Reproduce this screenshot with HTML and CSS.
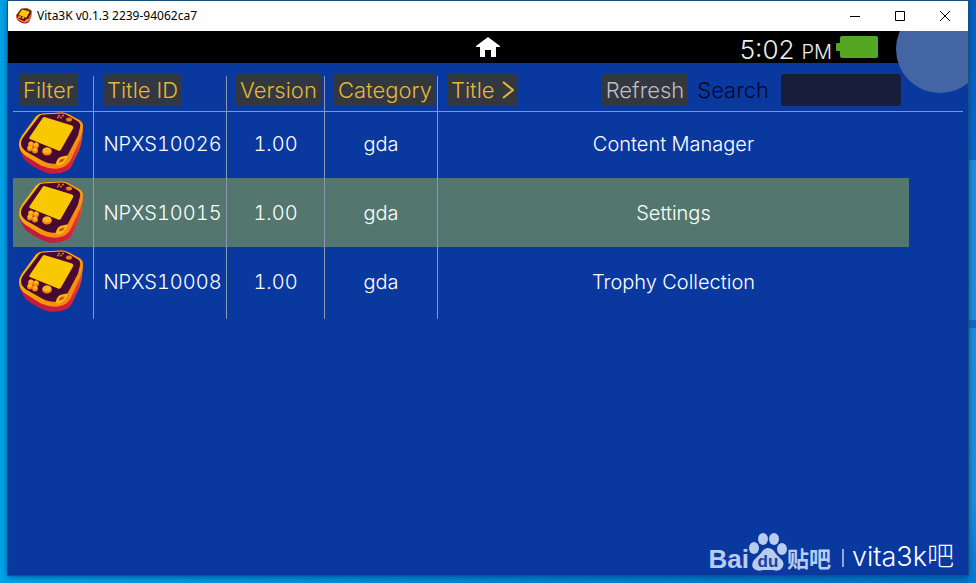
FILE: index.html
```html
<!DOCTYPE html>
<html lang="en">
<head>
<meta charset="utf-8">
<title>Vita3K v0.1.3 2239-94062ca7</title>
<link rel="stylesheet" href="styles.css">
</head>
<body>
<svg class="defs" aria-hidden="true">
  <defs>
    <linearGradient id="rim" x1="0" y1="0" x2="1" y2="1">
      <stop offset="0" stop-color="#ffc400"/><stop offset=".5" stop-color="#f9a00a"/><stop offset="1" stop-color="#ef7d14"/>
    </linearGradient>
    <linearGradient id="side" x1="0" y1="1" x2="1" y2="0">
      <stop offset="0" stop-color="#b3173f"/><stop offset=".45" stop-color="#d81f3c"/><stop offset="1" stop-color="#f26a1e"/>
    </linearGradient>
  </defs>
  <symbol id="vita" viewBox="0 0 64 62">
    <path fill="url(#side)" d="M17 4Q20 1 24 1L43 0Q46 0 50 2L61 8Q64 10 64 15L63 27Q62 33 60 38L53 53Q51 57 46 59Q39 62 30 61Q19 58 7 49Q3 44 1 38L0 29Z"/>
    <path fill="url(#rim)" d="M17 4Q20 1 24 1L43 0Q46 0 50 2L61 8Q64 10 64 14Q64 20 61 27L52 47Q48 55 39 56Q31 57 22 53L6 43Q0 38 0 32Q0 27 3 23Z"/>
    <path fill="#480a30" d="M20 4Q21 2 24 2L43 1Q46 1 49 3L59 9Q62 11 61 15L59 23L49 42Q48 44 43 45Q39 46 37 51Q31 52 23 48L7 39Q2 35 2 31Q2 28 4 25Z"/>
    <path fill="#fac800" d="M24 5Q25 4 27 5L53 13Q55 14 54 16L42 37Q41 39 39 38L12 27Q9 26 11 24Z"/>
    <path fill="#fbb813" d="M37 51Q38 45 43 44L48 43Q49 45 46 49Q43 53 39 53Q37 53 37 51Z"/>
    <path fill="#c0521c" d="M40 50Q40 46 46 46Q44 50 40 50Z"/>
    <g fill="#ee7d1c">
      <circle cx="12" cy="32" r="3"/><circle cx="17" cy="33" r="3"/><circle cx="11" cy="36" r="3"/><circle cx="16" cy="38" r="3"/>
      <ellipse cx="28" cy="39" rx="5" ry="4"/>
      <ellipse cx="50" cy="7" rx="3" ry="2"/><circle cx="40" cy="3" r="1"/><circle cx="44" cy="3" r="1"/><circle cx="42" cy="5" r="1"/><circle cx="39" cy="5" r="1"/>
    </g>
    <g fill="#ffb81b"><circle cx="12" cy="31" r="2"/><circle cx="17" cy="32" r="2"/><circle cx="11" cy="35" r="2"/><circle cx="16" cy="37" r="2"/><ellipse cx="28" cy="38" rx="4" ry="3"/></g>
  </symbol>
</svg>

<div class="window">
  <header class="titlebar">
    <svg class="app-icon" aria-hidden="true"><use href="#vita"/></svg>
    <span class="app-name">Vita3K v0.1.3 2239-94062ca7</span>
    <button class="win-btn" aria-label="Minimize"><svg viewBox="0 0 12 12"><path d="M1 6.500h10"/></svg></button>
    <button class="win-btn" aria-label="Maximize"><svg viewBox="0 0 12 12"><path d="M1.500 1.500h9v9h-9z"/></svg></button>
    <button class="win-btn" aria-label="Close"><svg viewBox="0 0 12 12"><path d="M1 1l10 10M11 1L1 11"/></svg></button>
  </header>

  <div class="screen">
    <div class="statusbar">
      <svg class="home" viewBox="0 0 24 20" aria-label="Home"><path d="M12 0l12 9v1h-4v10h-5v-7H9v7H4V10H0V9z"/></svg>
      <div class="clock"><span class="time">5:02</span><span class="ampm">PM</span>
        <svg class="battery" viewBox="0 0 42 22" aria-label="Battery"><rect y="7" width="5" height="8" rx="1"/><rect x="4" width="38" height="22" rx="2"/></svg>
      </div>
    </div>
    <div class="corner"></div>

    <main>
      <table>
        <colgroup><col class="c-icon"><col class="c-id"><col class="c-ver"><col class="c-cat"><col><col class="c-end"></colgroup>
        <thead>
          <tr>
            <th><button class="chip">Filter</button></th>
            <th><button class="chip">Title ID</button></th>
            <th><button class="chip">Version</button></th>
            <th><button class="chip">Category</button></th>
            <th>
              <div class="tools">
                <button class="chip sort">Title <svg viewBox="0 0 12 18" aria-hidden="true"><path d="M1 1l10 8L1 17"/></svg></button>
                <button class="chip refresh">Refresh</button>
                <label for="search">Search</label>
                <input id="search" type="text">
              </div>
            </th>
            <th></th>
          </tr>
        </thead>
        <tbody>
          <tr><td><svg class="icon"><use href="#vita"/></svg></td><td class="id">NPXS10026</td><td>1.00</td><td>gda</td><td>Content Manager</td><td></td></tr>
          <tr class="selected"><td><svg class="icon"><use href="#vita"/></svg></td><td class="id">NPXS10015</td><td>1.00</td><td>gda</td><td>Settings</td><td></td></tr>
          <tr><td><svg class="icon"><use href="#vita"/></svg></td><td class="id">NPXS10008</td><td>1.00</td><td>gda</td><td>Trophy Collection</td><td></td></tr>
        </tbody>
      </table>
    </main>
  </div>
</div>

<div class="watermark">
  <span class="brand">Bai</span>
  <span class="paw">
    <svg viewBox="0 0 38 40" aria-hidden="true"><ellipse cx="5" cy="16" rx="5" ry="6"/><ellipse cx="14" cy="7" rx="5" ry="6"/><ellipse cx="25" cy="7" rx="5" ry="6"/><ellipse cx="33" cy="17" rx="5" ry="6"/><path d="M19 16Q24 16 27 22L33 28Q36 32 33 36Q30 40 24 38H14Q8 40 4 36Q2 32 5 28L12 21Q15 16 19 16Z"/></svg>
    <span class="du">du</span>
  </span>
  <span class="tieba">贴吧</span>
  <span class="bar"></span>
  <span class="forum">vita3k吧</span>
</div>
</body>
</html>
```
FILE: styles.css
```css
* { box-sizing: border-box; }

body {
  margin: 0;
  min-height: 100vh;
  display: flex;
  padding: 1px 8px 8px;
  position: relative;
  font-family: Inter, "Noto Sans CJK SC", sans-serif;
  font-weight: 300;
  background:
    linear-gradient(#0560c4, #0568d0) right top / 8px 160px no-repeat,
    linear-gradient(#0b6cc8, #0b6cc8) right 320px / 8px 8px no-repeat,
    linear-gradient(#1f8ede, #1a90e0 500px, #0478d4) right top / 8px 100% no-repeat,
    linear-gradient(90deg, #00a2e8, #0084d4 50%, #0070c8);
}

.defs { position: absolute; width: 0; height: 0; }

button { font: inherit; border: 0; }

.window {
  flex: 1;
  display: flex;
  flex-direction: column;
  box-shadow: 0 0 0 1px #17507c, 0 1px 6px #023c7c;
}

.titlebar {
  height: 30px;
  display: flex;
  align-items: center;
  background: #fff;
  color: #000;
  padding: 0 1px 0 8px;
}
.app-icon { width: 16px; height: 16px; margin-right: 5px; }
.app-name {
  flex: 1;
  font: 400 12px/16px "Noto Sans", sans-serif;
}
.win-btn {
  width: 45px;
  height: 28px;
  padding: 0;
  background: none;
  display: grid;
  place-items: center;
}
.win-btn svg { width: 12px; height: 12px; fill: none; stroke: #000; stroke-width: 1; }

.screen {
  flex: 1;
  position: relative;
  overflow: hidden;
  background: #09389f;
}

.statusbar {
  height: 32px;
  display: grid;
  grid-template-columns: 1fr 24px 1fr;
  align-items: start;
  background: #000;
}
.home { grid-column: 2; width: 24px; height: 20px; margin-top: 6px; fill: #fff; }
.clock {
  display: flex;
  justify-content: flex-end;
  align-items: baseline;
  padding-right: 90px;
  color: #eee;
  line-height: 38px;
}
.time { font-size: 26px; margin-right: 7px; }
.ampm { font-size: 20px; margin-right: 4px; }
.battery { width: 42px; height: 22px; margin-top: 5px; fill: #55a622; align-self: flex-start; }

.corner {
  position: absolute;
  top: -26px;
  right: -16px;
  width: 88px;
  height: 88px;
  border-radius: 50%;
  background: #4365a3;
}

main { padding: 11px 5px; }

table {
  width: 100%;
  table-layout: fixed;
  border-collapse: separate;
  border-spacing: 0;
  font-size: 20px;
  font-variant-numeric: tabular-nums;
  line-height: 32px;
  color: #fff;
}
.c-icon { width: 81px; }
.c-id { width: 133px; }
.c-ver { width: 98px; }
.c-cat { width: 113px; }
.c-end { width: 54px; }

th {
  height: 38px;
  padding: 0 0 5px 9px;
  text-align: left;
  vertical-align: top;
  font-weight: 300;
  white-space: nowrap;
  border-bottom: 1px solid #8996b4;
  background: linear-gradient(#8996b4, #8996b4) right bottom / 1px 35px no-repeat;
}
th:first-child { padding-left: 6px; }
th:nth-child(n+5) { background: none; }

.chip {
  display: block;
  height: 32px;
  padding: 0 4px;
  line-height: 32px;
  font-size: 22px;
  border-radius: 3px;
  background: #333740;
  color: #e2b83c;
}
.sort { display: flex; align-items: center; gap: 7px; }
.sort svg { width: 12px; height: 18px; fill: none; stroke: #e2b83c; stroke-width: 2; }
.refresh { margin-left: auto; color: #bcbec2; }

.tools { display: flex; align-items: center; padding-right: 8px; }
.tools label { margin: 0 12px 0 9px; font-size: 22px; color: #020a28; }
.tools input {
  width: 120px;
  height: 32px;
  border: 0;
  border-radius: 3px;
  padding: 0 4px;
  background: #181d3a;
  color: #fff;
  font: inherit;
}

td {
  padding: 3px 0;
  text-align: center;
  white-space: nowrap;
  border-right: 1px solid #8996b4;
}
td:nth-child(n+5) { border-right: 0; }
td:nth-child(1) { padding-right: 4px; }
.id { padding-left: 5px; }
tbody tr:first-child td { padding-top: 0; }
tbody tr:last-child td { padding-bottom: 6px; }
.selected td:not(:last-child) { background: #53766f; }
.icon { display: block; width: 64px; height: 63px; margin-left: 6px; }

.watermark {
  position: absolute;
  right: 22px;
  bottom: 8px;
  display: flex;
  align-items: flex-end;
  color: #b9cbee;
}
.brand { font: 700 26px/32px "Liberation Sans", sans-serif; }
.paw { position: relative; width: 38px; height: 43px; }
.paw svg { width: 38px; height: 40px; fill: #b9cbee; }
.du {
  position: absolute;
  left: 0;
  right: 0;
  bottom: 3px;
  text-align: center;
  font: 700 17px/20px "Liberation Sans", sans-serif;
  color: #1743a2;
}
.tieba { font: 700 22px/36px "Noto Sans CJK SC", sans-serif; }
.bar { width: 2px; height: 18px; margin: 0 8px 8px 11px; background: #8ea6d8; }
.forum { font-size: 27px; line-height: 36px; color: #fff; }
```
